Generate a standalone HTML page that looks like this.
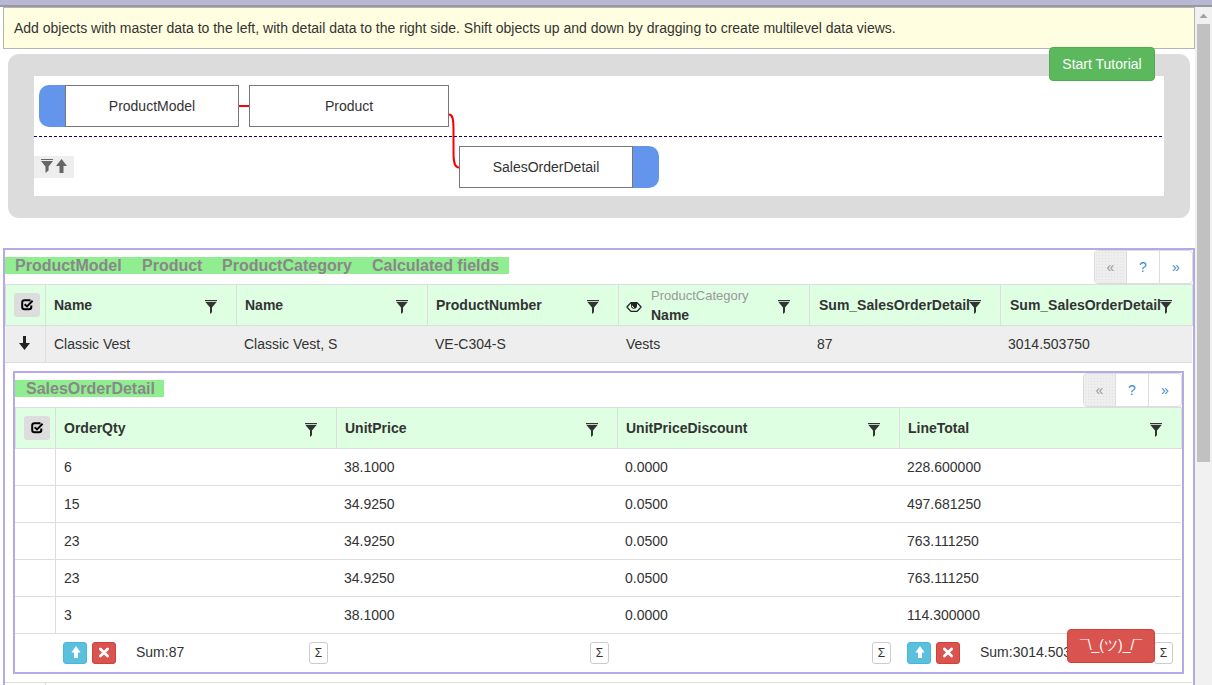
<!DOCTYPE html>
<html><head><meta charset="utf-8">
<style>
html,body{margin:0;padding:0;width:1212px;height:685px;overflow:hidden;background:#fff;}
body{font-family:"Liberation Sans",sans-serif;font-size:14px;color:#333;position:relative;}
.a{position:absolute;}
.t{position:absolute;white-space:nowrap;line-height:20px;}
.b{font-weight:bold;}
.box{position:absolute;box-sizing:border-box;border:1px solid #777;background:#fff;text-align:center;line-height:40px;}
.hdr{position:absolute;background:#dfffe3;}
.vl{position:absolute;width:1px;background:#ddd;}
.hl{position:absolute;height:1px;background:#ddd;}
.chk{position:absolute;width:26px;height:24px;background:#ddd;border-radius:3px;}
.sig{position:absolute;box-sizing:border-box;width:19px;height:22px;border:1px solid #ccc;border-radius:3px;background:#fff;font-size:12px;line-height:20px;text-align:center;color:#333;}
svg{position:absolute;display:block;}
.pgd{background-color:#eee;background-image:radial-gradient(circle,#e2e2e2 0.5px,transparent 0.8px);background-size:3px 3px;}
</style></head><body>

<!-- top chrome -->
<div class="a" style="left:0;top:0;width:1212px;height:5px;background:#b8b8d6"></div>
<div class="a" style="left:0;top:5px;width:1212px;height:2px;background:#999"></div>

<!-- scrollbar -->
<div class="a" style="left:1195px;top:7px;width:17px;height:678px;background:#f1f1f1"></div>
<div class="a" style="left:1197px;top:24px;width:13px;height:438px;background:#c1c1c1"></div>
<svg style="left:1199px;top:13px" width="9" height="6" viewBox="0 0 9 6"><polygon points="4.5,0.5 8.5,5 0.5,5" fill="#a3a3a3"/></svg>

<!-- yellow info -->
<div class="a" style="left:3px;top:7px;width:1190px;height:40px;background:#fffee0;border:1px solid #b4b4b4"></div>
<div class="t" style="left:14px;top:18px">Add objects with master data to the left, with detail data to the right side. Shift objects up and down by dragging to create multilevel data views.</div>

<!-- diagram panel -->
<div class="a" style="left:8px;top:54px;width:1182px;height:164px;background:#dcdcdc;border-radius:11px"></div>
<div class="a" style="left:34px;top:76px;width:1130px;height:120px;background:#fff"></div>
<div class="a" style="left:1049px;top:47px;width:106px;height:34px;box-sizing:border-box;background:#5cb85c;border:1px solid #4cae4c;border-radius:4px;color:#fff;text-align:center;line-height:32px">Start Tutorial</div>

<div class="a" style="left:39px;top:85px;width:30px;height:42px;background:#6495ed;border-radius:10px 0 0 10px"></div>
<div class="box" style="left:65px;top:85px;width:174px;height:42px">ProductModel</div>
<div class="a" style="left:239px;top:105px;width:10px;height:2px;background:#f00"></div>
<div class="box" style="left:249px;top:85px;width:200px;height:42px">Product</div>
<svg style="left:440px;top:105px" width="30" height="70" viewBox="0 0 30 70"><path d="M9,9.5 C12.5,9.5 13.5,14 13.5,24 L13.5,47 C13.5,57 14.5,62.5 19,62.5" stroke="#f00" stroke-width="2" fill="none"/></svg>
<div class="a" style="left:34px;top:136px;width:1130px;height:1px;background:repeating-linear-gradient(90deg,#000080 0 3px,transparent 3px 5px)"></div>
<div class="a" style="left:628px;top:146px;width:31px;height:42px;background:#6495ed;border-radius:0 10px 10px 0"></div>
<div class="box" style="left:459px;top:146px;width:174px;height:42px">SalesOrderDetail</div>
<div class="a" style="left:34px;top:156px;width:40px;height:22px;background:#eee"></div>
<svg style="left:41px;top:159px" width="12" height="14" viewBox="0 0 12 14"><rect x="0" y="0" width="12" height="1" fill="#666"/><polygon points="0,2 12,2 7.6,7.5 7.6,11.5 4.6,14 4.4,7.5" fill="#666"/></svg>
<svg style="left:56px;top:159px" width="11" height="14" viewBox="0 0 11 14"><polygon points="5.5,0 11,7 7.5,7 7.5,14 3.5,14 3.5,7 0,7" fill="#666"/></svg>

<!-- outer master table -->
<div class="a" style="left:3px;top:248px;width:1188px;height:440px;border:2px solid #b5aae6;border-bottom:none"></div>
<div class="a" style="left:5px;top:257px;width:504px;height:17px;background:#90ee90"></div>
<div class="t b" style="left:15px;top:256px;font-size:16px;color:#888">ProductModel</div>
<div class="t b" style="left:142px;top:256px;font-size:16px;color:#888">Product</div>
<div class="t b" style="left:222px;top:256px;font-size:16px;color:#888">ProductCategory</div>
<div class="t b" style="left:372px;top:256px;font-size:16px;color:#888">Calculated fields</div>

<!-- pager 1 -->
<div class="a" style="left:1094px;top:250px;width:99px;height:34px;box-sizing:border-box;border:1px solid #ddd;border-radius:4px;background:#fff;overflow:hidden">
  <div class="a pgd" style="left:0;top:0;width:31px;height:32px;border-right:1px solid #ddd;color:#999;text-align:center;line-height:32px">&laquo;</div>
  <div class="a" style="left:32px;top:0;width:32px;height:32px;border-right:1px solid #ddd;color:#428bca;text-align:center;line-height:32px">?</div>
  <div class="a" style="left:65px;top:0;width:32px;height:32px;color:#428bca;text-align:center;line-height:32px">&raquo;</div>
</div>

<div class="hl" style="left:5px;top:284px;width:1188px"></div>
<div class="hdr" style="left:5px;top:285px;width:1187px;height:40px"></div>
<div class="hl" style="left:5px;top:325px;width:1188px"></div>
<div class="a" style="left:5px;top:326px;width:1187px;height:36px;background:#eee"></div>
<div class="hl" style="left:5px;top:362px;width:1187px"></div>
<div class="vl" style="left:45px;top:285px;height:77px"></div>
<div class="vl" style="left:5px;top:285px;height:40px"></div>
<div class="a" style="left:5px;top:326px;width:1px;height:36px;background:#f5f5f3"></div>
<div class="vl" style="left:236px;top:285px;height:40px"></div>
<div class="vl" style="left:427px;top:285px;height:40px"></div>
<div class="vl" style="left:618px;top:285px;height:40px"></div>
<div class="vl" style="left:809px;top:285px;height:40px"></div>
<div class="vl" style="left:1000px;top:285px;height:40px"></div>
<div class="vl" style="left:1192px;top:285px;height:40px"></div>

<div class="chk" style="left:14px;top:293px"></div>
<div class="t b" style="left:54px;top:295px">Name</div>
<div class="t b" style="left:245px;top:295px">Name</div>
<div class="t b" style="left:436px;top:295px">ProductNumber</div>
<div class="t" style="left:651px;top:286px;font-size:13px;color:#999">ProductCategory</div>
<div class="t b" style="left:651px;top:305px">Name</div>
<div class="t b" style="left:819px;top:295px">Sum_SalesOrderDetail</div>
<div class="t b" style="left:1010px;top:295px">Sum_SalesOrderDetail</div>

<div class="t" style="left:54px;top:334px">Classic Vest</div>
<div class="t" style="left:244px;top:334px">Classic Vest, S</div>
<div class="t" style="left:435px;top:334px">VE-C304-S</div>
<div class="t" style="left:626px;top:334px">Vests</div>
<div class="t" style="left:817px;top:334px">87</div>
<div class="t" style="left:1008px;top:334px">3014.503750</div>

<!-- inner detail table -->
<div class="a" style="left:13px;top:371px;width:1167px;height:299px;border:2px solid #b5aae6"></div>
<div class="a" style="left:15px;top:380px;width:149px;height:17px;background:#90ee90"></div>
<div class="t b" style="left:26px;top:379px;font-size:16px;color:#888">SalesOrderDetail</div>

<div class="a" style="left:1083px;top:373px;width:99px;height:34px;box-sizing:border-box;border:1px solid #ddd;border-radius:4px;background:#fff;overflow:hidden">
  <div class="a pgd" style="left:0;top:0;width:31px;height:32px;border-right:1px solid #ddd;color:#999;text-align:center;line-height:32px">&laquo;</div>
  <div class="a" style="left:32px;top:0;width:32px;height:32px;border-right:1px solid #ddd;color:#428bca;text-align:center;line-height:32px">?</div>
  <div class="a" style="left:65px;top:0;width:32px;height:32px;color:#428bca;text-align:center;line-height:32px">&raquo;</div>
</div>

<div class="hl" style="left:15px;top:407px;width:1167px"></div>
<div class="hdr" style="left:15px;top:408px;width:1166px;height:40px"></div>
<div class="hl" style="left:15px;top:448px;width:1167px"></div>
<div class="hl" style="left:15px;top:485px;width:1166px"></div>
<div class="hl" style="left:15px;top:522px;width:1166px"></div>
<div class="hl" style="left:15px;top:559px;width:1166px"></div>
<div class="hl" style="left:15px;top:596px;width:1166px"></div>
<div class="hl" style="left:15px;top:633px;width:1166px"></div>
<div class="vl" style="left:55px;top:408px;height:225px"></div>
<div class="vl" style="left:15px;top:408px;height:40px"></div>
<div class="vl" style="left:336px;top:408px;height:40px"></div>
<div class="vl" style="left:617px;top:408px;height:40px"></div>
<div class="vl" style="left:899px;top:408px;height:40px"></div>
<div class="vl" style="left:1181px;top:408px;height:40px"></div>

<div class="chk" style="left:24px;top:416px"></div>
<div class="t b" style="left:64px;top:418px">OrderQty</div>
<div class="t b" style="left:345px;top:418px">UnitPrice</div>
<div class="t b" style="left:626px;top:418px">UnitPriceDiscount</div>
<div class="t b" style="left:908px;top:418px">LineTotal</div>

<div class="t" style="left:64px;top:457px">6</div>
<div class="t" style="left:344px;top:457px">38.1000</div>
<div class="t" style="left:625px;top:457px">0.0000</div>
<div class="t" style="left:907px;top:457px">228.600000</div>
<div class="t" style="left:64px;top:494px">15</div>
<div class="t" style="left:344px;top:494px">34.9250</div>
<div class="t" style="left:625px;top:494px">0.0500</div>
<div class="t" style="left:907px;top:494px">497.681250</div>
<div class="t" style="left:64px;top:531px">23</div>
<div class="t" style="left:344px;top:531px">34.9250</div>
<div class="t" style="left:625px;top:531px">0.0500</div>
<div class="t" style="left:907px;top:531px">763.111250</div>
<div class="t" style="left:64px;top:568px">23</div>
<div class="t" style="left:344px;top:568px">34.9250</div>
<div class="t" style="left:625px;top:568px">0.0500</div>
<div class="t" style="left:907px;top:568px">763.111250</div>
<div class="t" style="left:64px;top:605px">3</div>
<div class="t" style="left:344px;top:605px">38.1000</div>
<div class="t" style="left:625px;top:605px">0.0000</div>
<div class="t" style="left:907px;top:605px">114.300000</div>

<!-- footer -->
<div class="a" style="left:63px;top:642px;width:24px;height:22px;box-sizing:border-box;background:#5bc0de;border:1px solid #46b8da;border-radius:3px"></div>
<div class="a" style="left:92px;top:642px;width:24px;height:22px;box-sizing:border-box;background:#d9534f;border:1px solid #d43f3a;border-radius:3px"></div>
<div class="t" style="left:136px;top:642px">Sum:87</div>
<div class="sig" style="left:309px;top:642px">&Sigma;</div>
<div class="sig" style="left:590px;top:642px">&Sigma;</div>
<div class="sig" style="left:872px;top:642px">&Sigma;</div>
<div class="a" style="left:907px;top:642px;width:24px;height:22px;box-sizing:border-box;background:#5bc0de;border:1px solid #46b8da;border-radius:3px"></div>
<div class="a" style="left:936px;top:642px;width:24px;height:22px;box-sizing:border-box;background:#d9534f;border:1px solid #d43f3a;border-radius:3px"></div>
<div class="t" style="left:980px;top:642px">Sum:3014.503750</div>
<div class="sig" style="left:1154px;top:642px">&Sigma;</div>
<div class="a" style="left:1067px;top:629px;width:88px;height:34px;box-sizing:border-box;background:#d9534f;border:1px solid #d43f3a;border-radius:4px;color:#fff;text-align:center;line-height:30px">&macr;\_(&#12484;)_/&macr;</div>

<div class="hl" style="left:5px;top:682px;width:1187px"></div>
<div class="vl" style="left:45px;top:683px;height:2px"></div>

<svg style="left:205px;top:300px" width="12" height="14" viewBox="0 0 12 14"><rect x="0" y="0" width="12" height="1.2" fill="#333"/><polygon points="0.4,2.1 11.6,2.1 7,7.6 7,12.2 5,14 5,7.6" fill="#333"/></svg>
<svg style="left:396px;top:300px" width="12" height="14" viewBox="0 0 12 14"><rect x="0" y="0" width="12" height="1.2" fill="#333"/><polygon points="0.4,2.1 11.6,2.1 7,7.6 7,12.2 5,14 5,7.6" fill="#333"/></svg>
<svg style="left:587px;top:300px" width="12" height="14" viewBox="0 0 12 14"><rect x="0" y="0" width="12" height="1.2" fill="#333"/><polygon points="0.4,2.1 11.6,2.1 7,7.6 7,12.2 5,14 5,7.6" fill="#333"/></svg>
<svg style="left:778px;top:300px" width="12" height="14" viewBox="0 0 12 14"><rect x="0" y="0" width="12" height="1.2" fill="#333"/><polygon points="0.4,2.1 11.6,2.1 7,7.6 7,12.2 5,14 5,7.6" fill="#333"/></svg>
<svg style="left:969px;top:300px" width="12" height="14" viewBox="0 0 12 14"><rect x="0" y="0" width="12" height="1.2" fill="#333"/><polygon points="0.4,2.1 11.6,2.1 7,7.6 7,12.2 5,14 5,7.6" fill="#333"/></svg>
<svg style="left:1160px;top:300px" width="12" height="14" viewBox="0 0 12 14"><rect x="0" y="0" width="12" height="1.2" fill="#333"/><polygon points="0.4,2.1 11.6,2.1 7,7.6 7,12.2 5,14 5,7.6" fill="#333"/></svg>
<svg style="left:305px;top:423px" width="12" height="14" viewBox="0 0 12 14"><rect x="0" y="0" width="12" height="1.2" fill="#333"/><polygon points="0.4,2.1 11.6,2.1 7,7.6 7,12.2 5,14 5,7.6" fill="#333"/></svg>
<svg style="left:586px;top:423px" width="12" height="14" viewBox="0 0 12 14"><rect x="0" y="0" width="12" height="1.2" fill="#333"/><polygon points="0.4,2.1 11.6,2.1 7,7.6 7,12.2 5,14 5,7.6" fill="#333"/></svg>
<svg style="left:868px;top:423px" width="12" height="14" viewBox="0 0 12 14"><rect x="0" y="0" width="12" height="1.2" fill="#333"/><polygon points="0.4,2.1 11.6,2.1 7,7.6 7,12.2 5,14 5,7.6" fill="#333"/></svg>
<svg style="left:1150px;top:423px" width="12" height="14" viewBox="0 0 12 14"><rect x="0" y="0" width="12" height="1.2" fill="#333"/><polygon points="0.4,2.1 11.6,2.1 7,7.6 7,12.2 5,14 5,7.6" fill="#333"/></svg>
<svg style="left:21px;top:299px" width="13" height="12" viewBox="0 0 13 12"><path d="M9.5,1.2 H3.5 A2.3,2.3 0 0 0 1.2,3.5 V8 A2.3,2.3 0 0 0 3.5,10.3 H8 A2.3,2.3 0 0 0 10.3,8 V6.5" stroke="#000" stroke-width="2" fill="none"/><path d="M3.6,5.2 L6,7.4 L11.6,1.8" stroke="#000" stroke-width="2" fill="none"/></svg>
<svg style="left:31px;top:422px" width="13" height="12" viewBox="0 0 13 12"><path d="M9.5,1.2 H3.5 A2.3,2.3 0 0 0 1.2,3.5 V8 A2.3,2.3 0 0 0 3.5,10.3 H8 A2.3,2.3 0 0 0 10.3,8 V6.5" stroke="#000" stroke-width="2" fill="none"/><path d="M3.6,5.2 L6,7.4 L11.6,1.8" stroke="#000" stroke-width="2" fill="none"/></svg>
<svg style="left:626px;top:301px" width="16" height="12" viewBox="0 0 16 12"><path d="M0.9,6 L4.9,1.6 H11.1 L15.1,6 L11.1,10.4 H4.9 Z" stroke="#222" stroke-width="1.3" stroke-linejoin="round" fill="none"/><path d="M5,1.2 H11 V4.8 A3,3 0 0 1 5,4.8 Z" fill="#222"/><path d="M6.3,4.6 A1.8,1.8 0 0 0 8,6.6" stroke="#fff" stroke-width="0.9" fill="none"/></svg>
<svg style="left:19px;top:336px" width="11" height="14" viewBox="0 0 11 14"><polygon points="4,0 7,0 7,7 11,7 5.5,14 0,7 4,7" fill="#222"/></svg>
<svg style="left:71px;top:646px" width="10" height="12" viewBox="0 0 10 12"><polygon points="5,0 9.6,6.5 7,6.5 7,12 3,12 3,6.5 0.4,6.5" fill="#fff"/></svg>
<svg style="left:98px;top:647px" width="12" height="11" viewBox="0 0 12 11"><path d="M2.4,2 L9.6,9 M9.6,2 L2.4,9" stroke="#fff" stroke-width="2.8" stroke-linecap="round" fill="none"/></svg>
<svg style="left:915px;top:646px" width="10" height="12" viewBox="0 0 10 12"><polygon points="5,0 9.6,6.5 7,6.5 7,12 3,12 3,6.5 0.4,6.5" fill="#fff"/></svg>
<svg style="left:942px;top:647px" width="12" height="11" viewBox="0 0 12 11"><path d="M2.4,2 L9.6,9 M9.6,2 L2.4,9" stroke="#fff" stroke-width="2.8" stroke-linecap="round" fill="none"/></svg>
</body></html>
